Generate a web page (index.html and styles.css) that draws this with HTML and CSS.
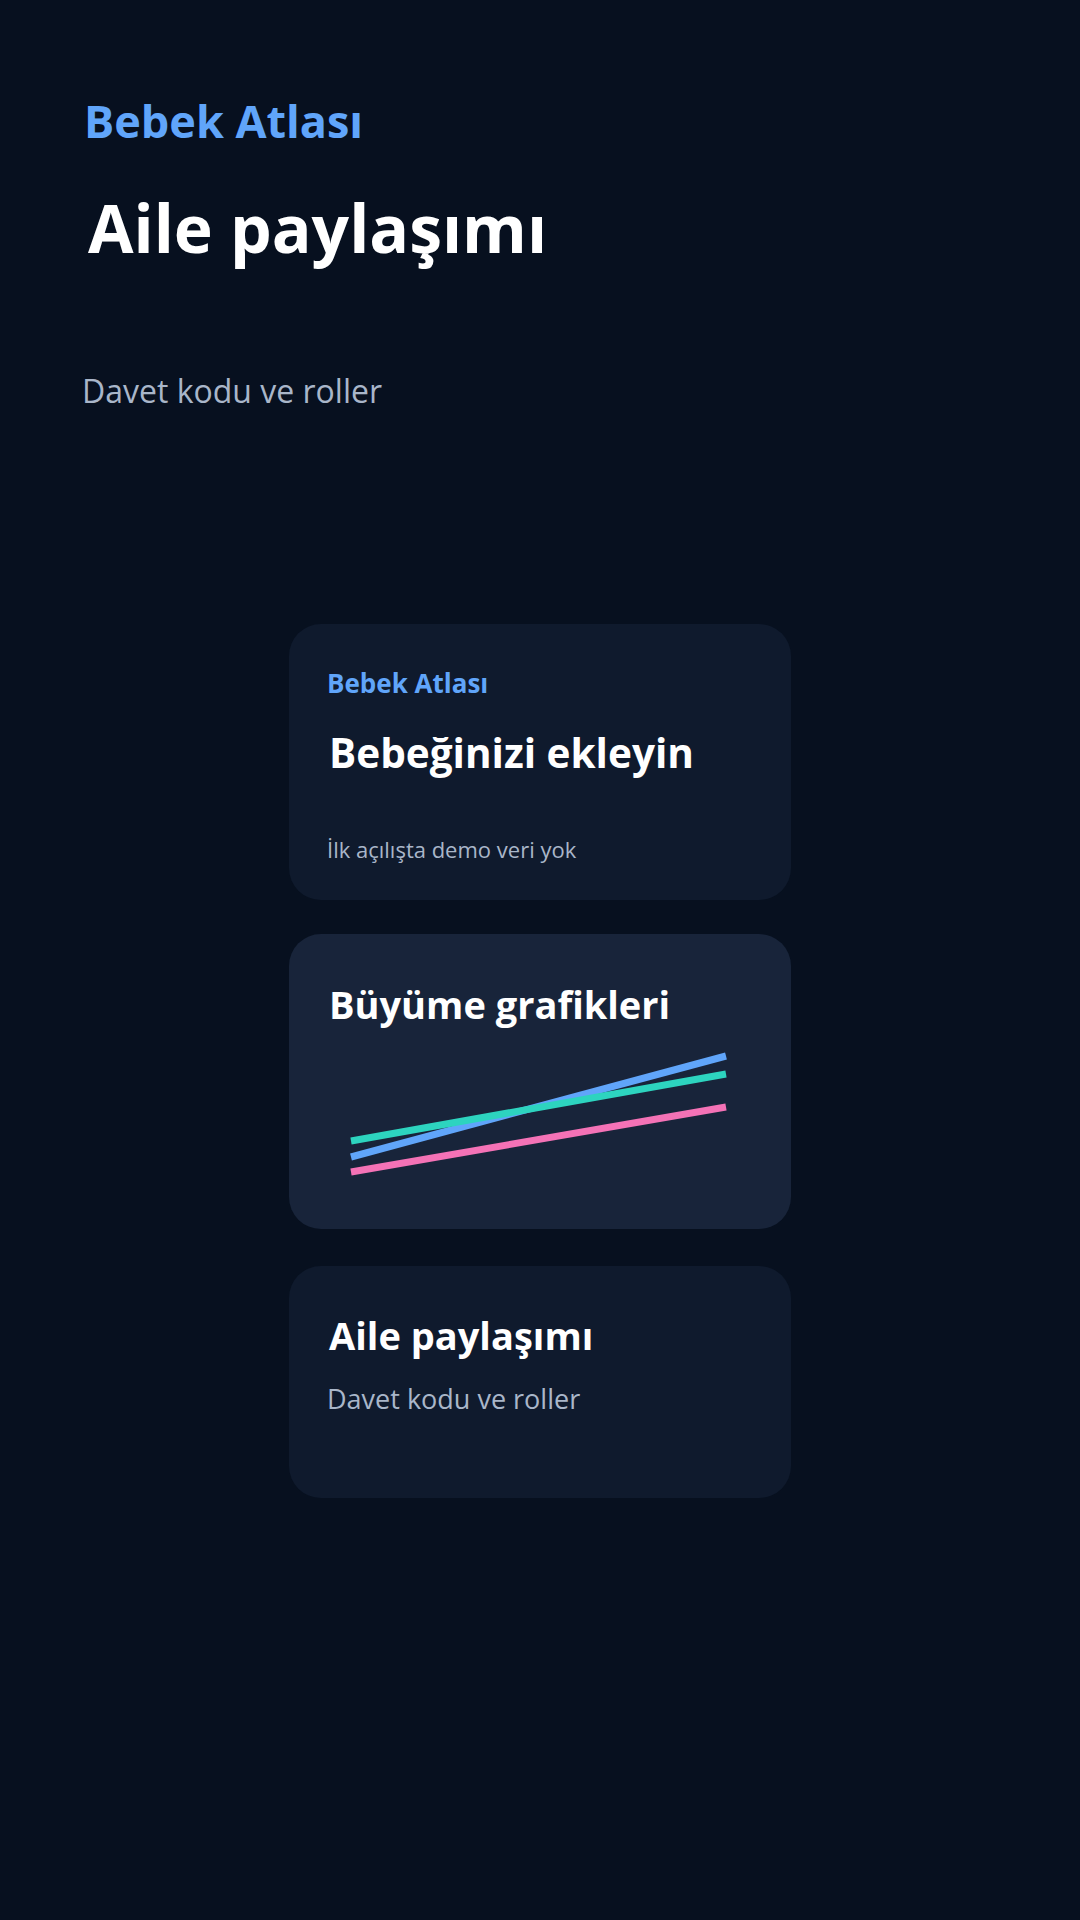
FILE: index.html
```html
<!DOCTYPE html>
<html lang="tr">
<head>
<meta charset="utf-8">
<title>Bebek Atlası</title>
<link rel="stylesheet" href="styles.css">
</head>
<body>
<main class="screen">
  <header class="hero">
    <div class="brand">Bebek Atlası</div>
    <h1 class="hero-title">Aile paylaşımı</h1>
    <p class="hero-subtitle">Davet kodu ve roller</p>
  </header>
  <section class="cards">
    <article class="card card-intro">
      <div class="card-brand">Bebek Atlası</div>
      <h2 class="card-title">Bebeğinizi ekleyin</h2>
      <p class="card-note">İlk açılışta demo veri yok</p>
    </article>
    <article class="card card-chart">
      <h2 class="card-title">Büyüme grafikleri</h2>
      <svg class="chart" viewBox="0 0 425 140" width="425" height="140" aria-hidden="true">
        <line x1="24" y1="112" x2="399" y2="11" stroke="#60a5fa" stroke-width="7"/>
        <line x1="24" y1="96" x2="399" y2="29" stroke="#2dd4bf" stroke-width="7"/>
        <line x1="24" y1="127" x2="399" y2="62" stroke="#f472b6" stroke-width="7"/>
      </svg>
    </article>
    <article class="card card-family">
      <h2 class="card-title">Aile paylaşımı</h2>
      <p class="card-subtitle">Davet kodu ve roller</p>
    </article>
  </section>
</main>
</body>
</html>
```
FILE: styles.css
```css
html, body {
  margin: 0;
  padding: 0;
  background: #07101f;
}
body {
  font-family: "Open Sans", "Noto Sans", "DejaVu Sans", sans-serif;
  color: #f8fafc;
  width: 1080px;
  min-height: 1920px;
}
.screen {
  display: flex;
  flex-direction: column;
}
.hero {
  display: flex;
  flex-direction: column;
  padding: 98px 82px 0 82px;
}
.brand {
  font-size: 45px;
  line-height: 1;
  font-weight: 700;
  color: #60a5fa;
  margin-left: 2px;
}
.hero-title {
  margin: 51px 0 0 6px;
  font-size: 66px;
  line-height: 1;
  font-weight: 700;
  color: #ffffff;
}
.hero-subtitle {
  margin: 115px 0 0 0;
  font-size: 32px;
  line-height: 1;
  font-weight: 400;
  color: #a9b6c9;
}
.cards {
  display: flex;
  flex-direction: column;
  align-items: center;
  margin-top: 217px;
}
.card {
  box-sizing: border-box;
  width: 502px;
  border-radius: 32px;
  background: #0f1a2d;
  padding: 0 38px;
  display: flex;
  flex-direction: column;
}
.card-intro {
  height: 276px;
  padding-top: 46px;
}
.card-chart {
  margin-top: 34px;
  height: 295px;
  padding-top: 51px;
  background: #18243a;
}
.card-family {
  margin-top: 37px;
  height: 232px;
  padding-top: 50px;
}
.card-brand {
  font-size: 26px;
  line-height: 1;
  font-weight: 700;
  color: #60a5fa;
}
.card-title {
  margin: 0 0 0 2px;
  font-size: 38px;
  line-height: 1;
  font-weight: 700;
  color: #ffffff;
}
.card-intro .card-title {
  margin-top: 37px;
  font-size: 40.5px;
}
.card-note {
  margin: 64px 0 0 0;
  font-size: 22px;
  line-height: 1;
  color: #a9b6c9;
}
.chart {
  display: block;
  margin-top: 22px;
}
.card-subtitle {
  margin: 31px 0 0 0;
  font-size: 27px;
  line-height: 1;
  color: #a9b6c9;
}
```
